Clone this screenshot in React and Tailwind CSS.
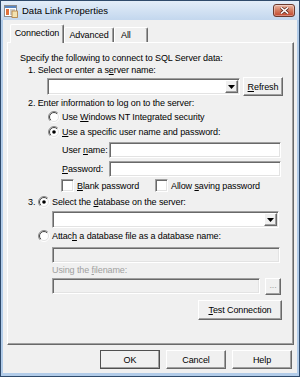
import React from "react";

function U({ children }) {
  return <span className="underline underline-offset-[1px]">{children}</span>;
}

function Edit({ className = "", disabled = false, children }) {
  return (
    <div
      className={`border border-t-[#a0a0a0] border-l-[#a0a0a0] border-b-white border-r-white shadow-[inset_1px_1px_0_#696969,inset_-1px_-1px_0_#e3e3e3] ${
        disabled ? "bg-[#f0f0f0]" : "bg-white"
      } ${className}`}
    >
      {children}
    </div>
  );
}

function Btn({ className = "", children }) {
  return (
    <div
      className={`border border-t-white border-l-white border-r-[#696969] border-b-[#696969] shadow-[inset_-1px_-1px_0_#a0a0a0] bg-[#f0f0f0] flex items-center justify-center ${className}`}
    >
      {children}
    </div>
  );
}

function Arrow() {
  return (
    <svg width="7" height="4" viewBox="0 0 7 4">
      <path d="M0 0H7L3.5 4Z" fill="#000" />
    </svg>
  );
}

function Combo({ className = "" }) {
  return (
    <Edit className={`flex justify-end p-[1px] ${className}`}>
      <Btn className="w-[13px] h-full">
        <Arrow />
      </Btn>
    </Edit>
  );
}

function Radio({ checked = false }) {
  return (
    <svg width="12" height="12" viewBox="0 0 12 12" className="shrink-0">
      <defs>
        <linearGradient id="rg" x1="0" y1="0" x2="1" y2="1">
          <stop offset="0.45" stopColor="#8a8a8a" />
          <stop offset="0.55" stopColor="#ffffff" />
        </linearGradient>
        <linearGradient id="rg2" x1="0" y1="0" x2="1" y2="1">
          <stop offset="0.45" stopColor="#404040" />
          <stop offset="0.55" stopColor="#e3e3e3" />
        </linearGradient>
      </defs>
      <circle cx="6" cy="6" r="5.5" fill="none" stroke="url(#rg)" />
      <circle cx="6" cy="6" r="4.5" fill="#fff" stroke="url(#rg2)" />
      {checked && <circle cx="6" cy="6" r="1.8" fill="#000" />}
    </svg>
  );
}

function Check() {
  return (
    <div className="w-[13px] h-[13px] shrink-0 bg-white border border-t-[#a0a0a0] border-l-[#a0a0a0] border-b-white border-r-white shadow-[inset_1px_1px_0_#696969,inset_-1px_-1px_0_#e3e3e3]" />
  );
}

function TitleIcon() {
  return (
    <svg width="14" height="14" viewBox="0 0 14 14" className="shrink-0">
      <rect x="0.5" y="1.5" width="12" height="11" fill="#fff" stroke="#8c8c8c" />
      <rect x="1" y="2" width="11" height="2" fill="#5a86c0" />
      <rect x="2" y="5" width="3" height="6" fill="#e0703a" />
      <path d="M6 6H11M6 8H11M6 10H11" stroke="#9a9a9a" strokeWidth="1" />
      <rect x="8" y="7" width="5.5" height="6.5" fill="#f3e2b0" stroke="#b07a3a" strokeWidth="0.8" />
    </svg>
  );
}

function CloseBtn() {
  return (
    <div className="w-[22px] h-[13px] rounded-[3px] border border-[#6a3a2e] bg-gradient-to-b from-[#e9b7a5] via-[#d47a5e] to-[#c2442b] flex items-center justify-center shadow-[inset_0_0_0_1px_rgba(255,255,255,0.35)]">
      <svg width="9" height="7" viewBox="0 0 9 7">
        <path d="M1 0.5L8 6.5M8 0.5L1 6.5" stroke="#5a2a20" strokeWidth="3" />
        <path d="M1 0.5L8 6.5M8 0.5L1 6.5" stroke="#fff" strokeWidth="1.6" />
      </svg>
    </div>
  );
}

export default function App() {
  return (
    <div className="w-[300px] h-[377px] border border-[#2f4a6b] bg-[#b2cce9] flex flex-col font-['Liberation_Sans',Arial,sans-serif] text-[9px] leading-[12px] tracking-[-0.1px] text-black overflow-hidden select-none">
      {/* Title bar */}
      <div className="h-[19px] shrink-0 flex items-center pl-[3px] pr-[4px] bg-gradient-to-b from-[#e3edf8] to-[#c3d7ee]">
        <TitleIcon />
        <span className="ml-[4px] text-[9.5px] tracking-normal text-black">Data Link Properties</span>
        <div className="ml-auto">
          <CloseBtn />
        </div>
      </div>

      {/* Body */}
      <div className="mx-[2px] mb-[3px] flex-1 bg-[#f0f0f0] flex flex-col pt-[4px] pl-[4px]">
        {/* Tabs */}
        <div className="h-[18px] flex items-end">
          <div className="ml-[3px] w-[54px] h-[19px] -mb-[1px] relative z-10 bg-[#f0f0f0] border-t border-l border-white border-r border-r-[#696969] rounded-t-[2px] shadow-[inset_-1px_0_0_#a0a0a0] flex items-center justify-center pb-[2px]">
            Connection
          </div>
          <div className="w-[50px] h-[15px] bg-[#f0f0f0] border-t border-l border-white border-r border-r-[#696969] rounded-t-[2px] shadow-[inset_-1px_0_0_#a0a0a0] flex items-center justify-center">
            Advanced
          </div>
          <div className="w-[34px] h-[15px] bg-[#f0f0f0] border-t border-l border-white border-r border-r-[#696969] rounded-t-[2px] shadow-[inset_-1px_0_0_#a0a0a0] flex items-center pl-[6px]">
            All
          </div>
        </div>

        {/* Panel */}
        <div className="w-[287px] h-[303px] border border-t-white border-l-white border-r-[#696969] border-b-[#696969] shadow-[inset_-1px_-1px_0_#a0a0a0] flex flex-col">
          <div className="mt-[9px] pl-[12px] h-[12px]">Specify the following to connect to SQL Server data:</div>
          <div className="pl-[20px] h-[12px]">1. Select or enter a s<U>e</U>rver name:</div>
          <div className="mt-[1px] pl-[39px] h-[19px] flex items-center gap-[3px]">
            <Combo className="w-[193px] h-[17px]" />
            <Btn className="w-[40px] h-[19px]">
              <span>
                <U>R</U>efresh
              </span>
            </Btn>
          </div>
          <div className="mt-[1px] pl-[20px] h-[12px]">2. Enter information to log on to the server:</div>
          <div className="mt-[1px] pl-[40px] h-[14px] flex items-center gap-[2px]">
            <Radio />
            <span>
              Use <U>W</U>indows NT Integrated security
            </span>
          </div>
          <div className="mt-[1px] pl-[40px] h-[14px] flex items-center gap-[2px]">
            <Radio checked />
            <span>
              <U>U</U>se a specific user name and password:
            </span>
          </div>
          <div className="mt-[3px] pl-[54px] h-[16px] flex items-center">
            <span className="w-[47px]">
              User <U>n</U>ame:
            </span>
            <Edit className="w-[172px] h-[16px]" />
          </div>
          <div className="mt-[3px] pl-[54px] h-[16px] flex items-center">
            <span className="w-[47px]">
              <U>P</U>assword:
            </span>
            <Edit className="w-[172px] h-[16px]" />
          </div>
          <div className="mt-[2px] pl-[53px] h-[13px] flex items-center">
            <div className="w-[94px] flex items-center gap-[3px]">
              <Check />
              <span>
                <U>B</U>lank password
              </span>
            </div>
            <div className="flex items-center gap-[3px]">
              <Check />
              <span>
                Allow <U>s</U>aving password
              </span>
            </div>
          </div>
          <div className="mt-[3px] pl-[20px] h-[14px] flex items-center">
            <span className="w-[10px]">3.</span>
            <Radio checked />
            <span className="ml-[2px]">
              Select the <U>d</U>atabase on the server:
            </span>
          </div>
          <div className="mt-[2px] pl-[44px]">
            <Combo className="w-[227px] h-[17px]" />
          </div>
          <div className="mt-[1px] pl-[30px] h-[14px] flex items-center gap-[2px]">
            <Radio />
            <span>
              Attac<U>h</U> a database file as a database name:
            </span>
          </div>
          <div className="mt-[4px] pl-[44px]">
            <Edit disabled className="w-[228px] h-[16px]" />
          </div>
          <div className="mt-[1px] pl-[44px] h-[12px] text-[#a0a0a0]">
            Using the <U>f</U>ilename:
          </div>
          <div className="mt-[2px] pl-[44px] h-[17px] flex items-start gap-[5px]">
            <Edit disabled className="w-[208px] h-[16px]" />
            <Btn className="w-[16px] h-[17px] text-[#a0a0a0]">
              <span className="-mt-[3px]">...</span>
            </Btn>
          </div>
          <div className="mt-[5px] pl-[190px]">
            <Btn className="w-[84px] h-[20px]">
              <span>
                <U>T</U>est Connection
              </span>
            </Btn>
          </div>
        </div>

        {/* Dialog buttons */}
        <div className="mt-[5px] pr-[5px] flex justify-end gap-[6px]">
          <Btn className="w-[60px] h-[19px] outline outline-1 outline-[#505050] -outline-offset-1">OK</Btn>
          <Btn className="w-[60px] h-[19px]">Cancel</Btn>
          <Btn className="w-[60px] h-[19px]">Help</Btn>
        </div>
      </div>
    </div>
  );
}
